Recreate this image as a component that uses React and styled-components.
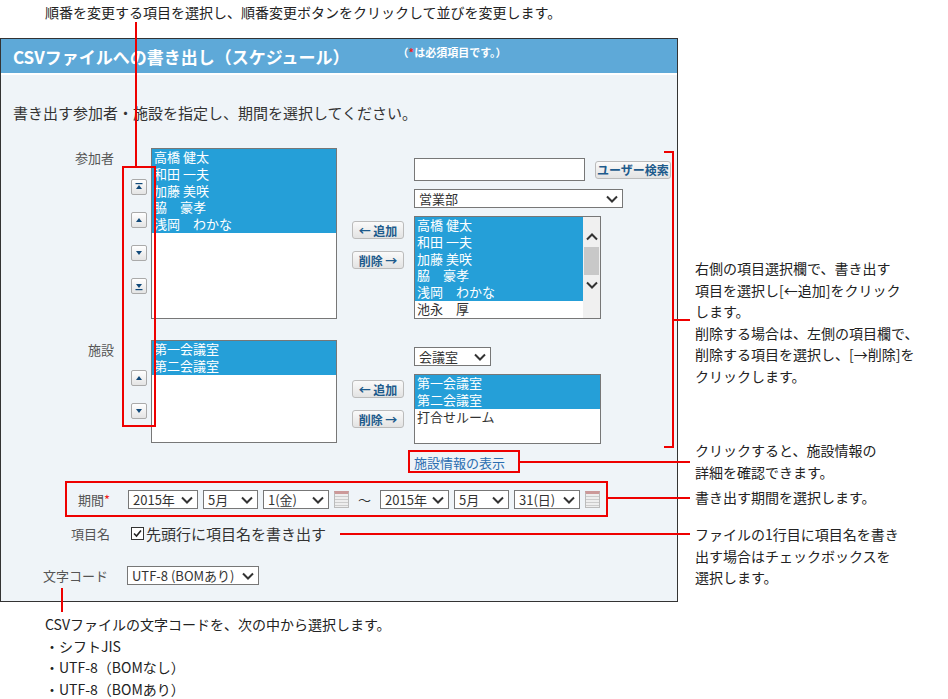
import React from "react";
import styled, { createGlobalStyle } from "styled-components";

const G = createGlobalStyle`
  body{margin:0;background:#fff;font-family:"Noto Sans CJK JP","Noto Sans",sans-serif;color:#333;}
`;
const Page = styled.div`position:relative;width:948px;height:699px;overflow:hidden;`;
const Panel = styled.div`position:absolute;left:0;top:38px;width:676px;height:562px;border:1px solid #333;background:#eff4f8;`;
const Header = styled.div`height:34px;background:#5ea9d8;border-bottom:2px solid #fff;display:flex;align-items:center;padding-left:12px;gap:48px;color:#fff;`;
const Title = styled.div`font-size:17px;font-weight:bold;`;
const Req = styled.div`font-size:11px;font-weight:bold;margin-top:-8px;span{color:#e22;}`;
const Desc = styled.div`font-size:15px;padding:27px 0 0 12px;height:36px;`;
const Grid = styled.div`display:grid;grid-template-columns:118px 32px 186px 77px 1fr;margin-top:${p=>p.mt}px;`;
const Label = styled.div`font-size:13px;color:#555;text-align:right;padding-right:5px;`;
const MoveCol = styled.div`display:flex;flex-direction:column;gap:17px;padding:${p=>p.pt}px 0 0 12px;`;
const MoveBtn = styled.div`width:14px;height:14px;border:1px solid #aaa;border-radius:2px;background:linear-gradient(#fff,#e4e4e4);display:flex;align-items:center;justify-content:center;`;
const List = styled.div`width:${p=>p.w||184}px;height:${p=>p.h}px;border:1px solid #777;background:#fff;font-size:13px;line-height:16.8px;overflow:hidden;display:flex;`;
const Items = styled.div`flex:1;`;
const Item = styled.div`padding-left:2px;height:16.8px;white-space:pre;background:${p=>p.sel?"#259fd8":"transparent"};color:${p=>p.sel?"#fff":"#333"};`;
const Scroll = styled.div`width:17px;background:#f0f0f0;display:flex;flex-direction:column;align-items:center;padding-top:16px;gap:6px;`;
const Thumb = styled.div`width:15px;height:28px;background:#c8c8c8;`;
const MidCol = styled.div`display:flex;flex-direction:column;gap:12px;padding:${p=>p.pt}px 0 0 15px;`;
const Btn = styled.div`height:18px;width:${p=>p.w}px;box-sizing:border-box;border:1px solid #bbb;border-radius:3px;background:linear-gradient(#fafafa,#e3e3e3);font-size:12px;font-weight:bold;color:#1e5b8c;display:flex;align-items:center;justify-content:center;white-space:nowrap;`;
const Right = styled.div`display:flex;flex-direction:column;gap:8px;padding-top:${p=>p.pt}px;`;
const Row = styled.div`display:flex;align-items:center;gap:10px;`;
const Input = styled.div`width:169px;height:21px;border:1px solid #777;background:#fff;`;
const Sel = styled.div`width:${p=>p.w}px;height:19px;box-sizing:border-box;border:1px solid #777;background:#fff;font-size:13px;display:flex;align-items:center;justify-content:space-between;padding:0 4px;color:#333;svg{flex:none;}`;
const Link = styled.div`font-size:13px;color:#2a6db0;margin:9px 0 0 413px;`;
const FRow = styled.div`display:flex;align-items:center;margin:${p=>p.mt}px 0 0 ${p=>p.ml}px;gap:${p=>p.gap||5}px;font-size:13px;`;
const FLabel = styled.span`color:#555;font-size:13px;width:${p=>p.w}px;span{color:#e22;}`;
const Cal = styled.div`width:13px;height:13px;border:1px solid #bbb;background:repeating-linear-gradient(#eee 0 2px,#ccc 2px 3px);border-top:3px solid #c99;`;
const Check = styled.div`display:flex;align-items:center;font-size:15px;gap:2px;`;
const Box = styled.div`width:11px;height:11px;border:1px solid #333;background:#fff;display:flex;align-items:center;justify-content:center;`;
const Note = styled.div`position:absolute;left:${p=>p.x}px;top:${p=>p.y}px;font-size:14px;line-height:21.5px;color:#222;white-space:pre;`;
const RedBox = styled.div`position:absolute;left:${p=>p.x}px;top:${p=>p.y}px;width:${p=>p.w}px;height:${p=>p.h}px;border:2px solid #e00;box-sizing:border-box;`;
const HLine = styled.div`position:absolute;left:${p=>p.x}px;top:${p=>p.y}px;width:${p=>p.w}px;height:2px;background:#e00;`;
const VLine = styled.div`position:absolute;left:${p=>p.x}px;top:${p=>p.y}px;height:${p=>p.h}px;width:2px;background:#e00;`;

const Chev = ({up}) => (<svg width="12" height="8" viewBox="0 0 12 8"><path d={up?"M1 6.5l5-5 5 5":"M1 1.5l5 5 5-5"} fill="none" stroke="#333" strokeWidth="2"/></svg>);
const S = ({w,children}) => <Sel w={w}><span>{children}</span><Chev/></Sel>;
const Arrow = ({d,bar}) => (<svg width="10" height="10" viewBox="0 0 10 10">
  {bar==="top"&&<rect x="1.5" y="1" width="7" height="1.2" fill="#124a7a"/>}
  {bar==="bot"&&<rect x="1.5" y="8" width="7" height="1.2" fill="#124a7a"/>}
  <path d={d==="up"?"M5 3L8 7H2z":"M5 7L8 3H2z"} fill="#124a7a"/></svg>);

export default function App(){
  const people=["高橋 健太","和田 一夫","加藤 美咲","脇　豪孝","浅岡　わかな"];
  return (<Page><G/>
    <Note x={45} y={2}>順番を変更する項目を選択し、順番変更ボタンをクリックして並びを変更します。</Note>
    <Panel>
      <Header><Title>CSVファイルへの書き出し（スケジュール）</Title><Req>（<span>*</span>は必須項目です。）</Req></Header>
      <Desc>書き出す参加者・施設を指定し、期間を選択してください。</Desc>
      <Grid mt={10}>
        <Label>参加者</Label>
        <MoveCol pt={31}><MoveBtn><Arrow d="up" bar="top"/></MoveBtn><MoveBtn><Arrow d="up"/></MoveBtn><MoveBtn><Arrow d="down"/></MoveBtn><MoveBtn><Arrow d="down" bar="bot"/></MoveBtn></MoveCol>
        <List h={169}><Items>{people.map(n=><Item sel key={n}>{n}</Item>)}</Items></List>
        <MidCol pt={73}><Btn w={52}>← 追加</Btn><Btn w={52}>削除 →</Btn></MidCol>
        <Right pt={10}>
          <Row><Input/><Btn w={76}>ユーザー検索</Btn></Row>
          <S w={209}>営業部</S>
          <List w={185} h={101}><Items>{people.map(n=><Item sel key={n}>{n}</Item>)}<Item>池永　厚</Item></Items><Scroll><Chev up/><Thumb/><Chev/></Scroll></List>
        </Right>
      </Grid>
      <Grid mt={21}>
        <Label>施設</Label>
        <MoveCol pt={30}><MoveBtn><Arrow d="up"/></MoveBtn><MoveBtn><Arrow d="down"/></MoveBtn></MoveCol>
        <List h={101}><Items><Item sel>第一会議室</Item><Item sel>第二会議室</Item></Items></List>
        <MidCol pt={40}><Btn w={52}>← 追加</Btn><Btn w={52}>削除 →</Btn></MidCol>
        <Right pt={7}>
          <S w={77}>会議室</S>
          <List w={185} h={68}><Items><Item sel>第一会議室</Item><Item sel>第二会議室</Item><Item>打合せルーム</Item></Items></List>
        </Right>
      </Grid>
      <Link>施設情報の表示</Link>
      <FRow mt={18} ml={77} gap={5}>
        <FLabel w={45}>期間<span>*</span></FLabel>
        <S w={70}>2015年</S><S w={55}>5月</S><S w={66}>1(金)</S><Cal/>
        <span style={{margin:"0 4px"}}>～</span>
        <S w={69}>2015年</S><S w={55}>5月</S><S w={66}>31(日)</S><Cal/>
      </FRow>
      <FRow mt={14} ml={70} gap={17}>
        <FLabel w={43}>項目名</FLabel>
        <Check><Box><svg width="9" height="9" viewBox="0 0 9 9"><path d="M1 4.5l2.5 2.5L8 1.5" fill="none" stroke="#222" strokeWidth="1.6"/></svg></Box>先頭行に項目名を書き出す</Check>
      </FRow>
      <FRow mt={22} ml={42} gap={10}>
        <FLabel w={74}>文字コード</FLabel>
        <S w={132}>UTF-8 (BOMあり)</S>
      </FRow>
    </Panel>
    <VLine x={135} y={22} h={145}/>
    <RedBox x={122} y={166} w={34} h={261}/>
    <HLine x={664} y={151} w={10}/><HLine x={664} y={446} w={10}/><VLine x={672} y={151} h={297}/>
    <HLine x={672} y={319} w={18}/>
    <Note x={695} y={258}>{"右側の項目選択欄で、書き出す\n項目を選択し[←追加]をクリック\nします。\n削除する場合は、左側の項目欄で、\n削除する項目を選択し、[→削除]を\nクリックします。"}</Note>
    <RedBox x={408} y={450} w={112} h={23}/>
    <HLine x={519} y={461} w={171}/>
    <Note x={695} y={440}>{"クリックすると、施設情報の\n詳細を確認できます。"}</Note>
    <RedBox x={65} y={481} w={543} h={36}/>
    <HLine x={607} y={497} w={83}/>
    <Note x={695} y={487}>書き出す期間を選択します。</Note>
    <HLine x={340} y={533} w={350}/>
    <Note x={695} y={524}>{"ファイルの1行目に項目名を書き\n出す場合はチェックボックスを\n選択します。"}</Note>
    <VLine x={61} y={588} h={24}/>
    <Note x={45} y={614}>{"CSVファイルの文字コードを、次の中から選択します。\n・シフトJIS\n・UTF-8（BOMなし）\n・UTF-8（BOMあり）"}</Note>
  </Page>);
}
